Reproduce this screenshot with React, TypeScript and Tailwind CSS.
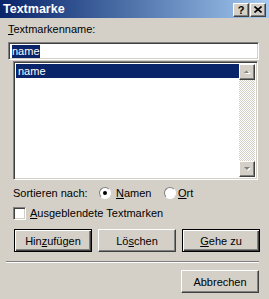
const raised = "border border-t-white border-l-white border-b-[#404040] border-r-[#404040] shadow-[inset_-1px_-1px_0_#808080]";
const sunken = "border border-t-[#808080] border-l-[#808080] border-b-white border-r-white shadow-[inset_1px_1px_0_#404040,inset_-1px_-1px_0_#d4d0c8]";

function WinButton({ children, def, w = "w-[78px]" }: { children: React.ReactNode; def?: boolean; w?: string }) {
    return (
        <div className={`${w} h-[23px] flex items-center justify-center ${def ? "border border-black shadow-[inset_1px_1px_0_#fff,inset_-1px_-1px_0_#404040,inset_-2px_-2px_0_#808080]" : raised}`}>
            <span>{children}</span>
        </div>
    );
}

function Arrow({ up }: { up?: boolean }) {
    return (
        <div className={`w-[16px] h-[16px] bg-[#d4d0c8] flex items-center justify-center ${raised}`}>
            <svg width="7" height="4" viewBox="0 0 7 4">
                {up ? (
                    <>
                        <path d="M1 4h6L4 1z" fill="#fff" />
                        <path d="M0 3h5L2.5 0.5z" fill="#808080" />
                    </>
                ) : (
                    <>
                        <path d="M1 1h6L4 4z" fill="#fff" />
                        <path d="M0 0h6L3 3z" fill="#808080" />
                    </>
                )}
            </svg>
        </div>
    );
}

export default function App() {
    return (
        <div className="w-[269px] h-[299px] bg-[#d4d0c8] overflow-hidden text-black text-[11px] leading-[14px] font-['Liberation_Sans',Arial,sans-serif]">
            <div className="h-[18px] flex items-center justify-between pl-[3px] pr-[3px] bg-gradient-to-r from-[#0a246a] to-[#a6caf0]">
                <span className="text-white font-bold text-[12.5px]">Textmarke</span>
                <div className="flex gap-[1px] mt-[1px]">
                    <div className={`w-[16px] h-[14px] bg-[#d4d0c8] flex items-center justify-center font-bold text-[11px] ${raised}`}>?</div>
                    <div className={`w-[16px] h-[14px] bg-[#d4d0c8] flex items-center justify-center ${raised}`}>
                        <svg width="8" height="7" viewBox="0 0 8 7">
                            <path d="M0.5 0.5l7 6M7.5 0.5l-7 6" stroke="#000" strokeWidth="1.6" />
                        </svg>
                    </div>
                </div>
            </div>
            <div className="mt-[4px] ml-[8px]">
                <span><span className="underline">T</span>extmarkenname:</span>
            </div>
            <div className={`mt-[6px] ml-[8px] w-[251px] h-[18px] bg-white flex items-center pl-[3px] ${sunken}`}>
                <span className="bg-[#0a246a] text-white leading-[13px]">name</span>
            </div>
            <div className={`mt-[1px] ml-[13px] w-[245px] h-[119px] bg-white flex p-[2px] ${sunken}`}>
                <div className="flex-1">
                    <div className="h-[14px] bg-[#0a246a] text-white pl-[2px]">name</div>
                </div>
                <div className="w-[16px] flex flex-col justify-between bg-[repeating-conic-gradient(#d4d0c8_0_25%,#fff_0_50%)] bg-[length:2px_2px]">
                    <Arrow up />
                    <Arrow />
                </div>
            </div>
            <div className="mt-[6px] ml-[13px] flex items-center">
                <span className="w-[86px]">Sortieren nach:</span>
                <div className="w-[12px] h-[12px] rounded-full bg-white border border-t-[#808080] border-l-[#808080] border-b-white border-r-white flex items-center justify-center">
                    <div className="w-[4px] h-[4px] rounded-full bg-black" />
                </div>
                <span className="ml-[5px] w-[48px]"><span className="underline">N</span>amen</span>
                <div className="w-[12px] h-[12px] rounded-full bg-white border border-t-[#808080] border-l-[#808080] border-b-white border-r-white" />
                <span className="ml-[2px]"><span className="underline">O</span>rt</span>
            </div>
            <div className="mt-[6px] ml-[13px] flex items-center">
                <div className={`w-[13px] h-[13px] bg-white ${sunken}`} />
                <span className="ml-[4px]"><span className="underline">A</span>usgeblendete Textmarken</span>
            </div>
            <div className="mt-[9px] ml-[14px] flex gap-[6px]">
                <WinButton def>Hin<span className="underline">z</span>ufügen</WinButton>
                <WinButton>Lö<span className="underline">s</span>chen</WinButton>
                <WinButton def>
                    <span className="underline">G</span>ehe zu
                </WinButton>
            </div>
            <div className="mt-[9px] ml-[6px] w-[253px] border-t border-t-[#808080] border-b border-b-white" />
            <div className="mt-[7px] ml-[181px]">
                <WinButton>Abbrechen</WinButton>
            </div>
        </div>
    );
}
